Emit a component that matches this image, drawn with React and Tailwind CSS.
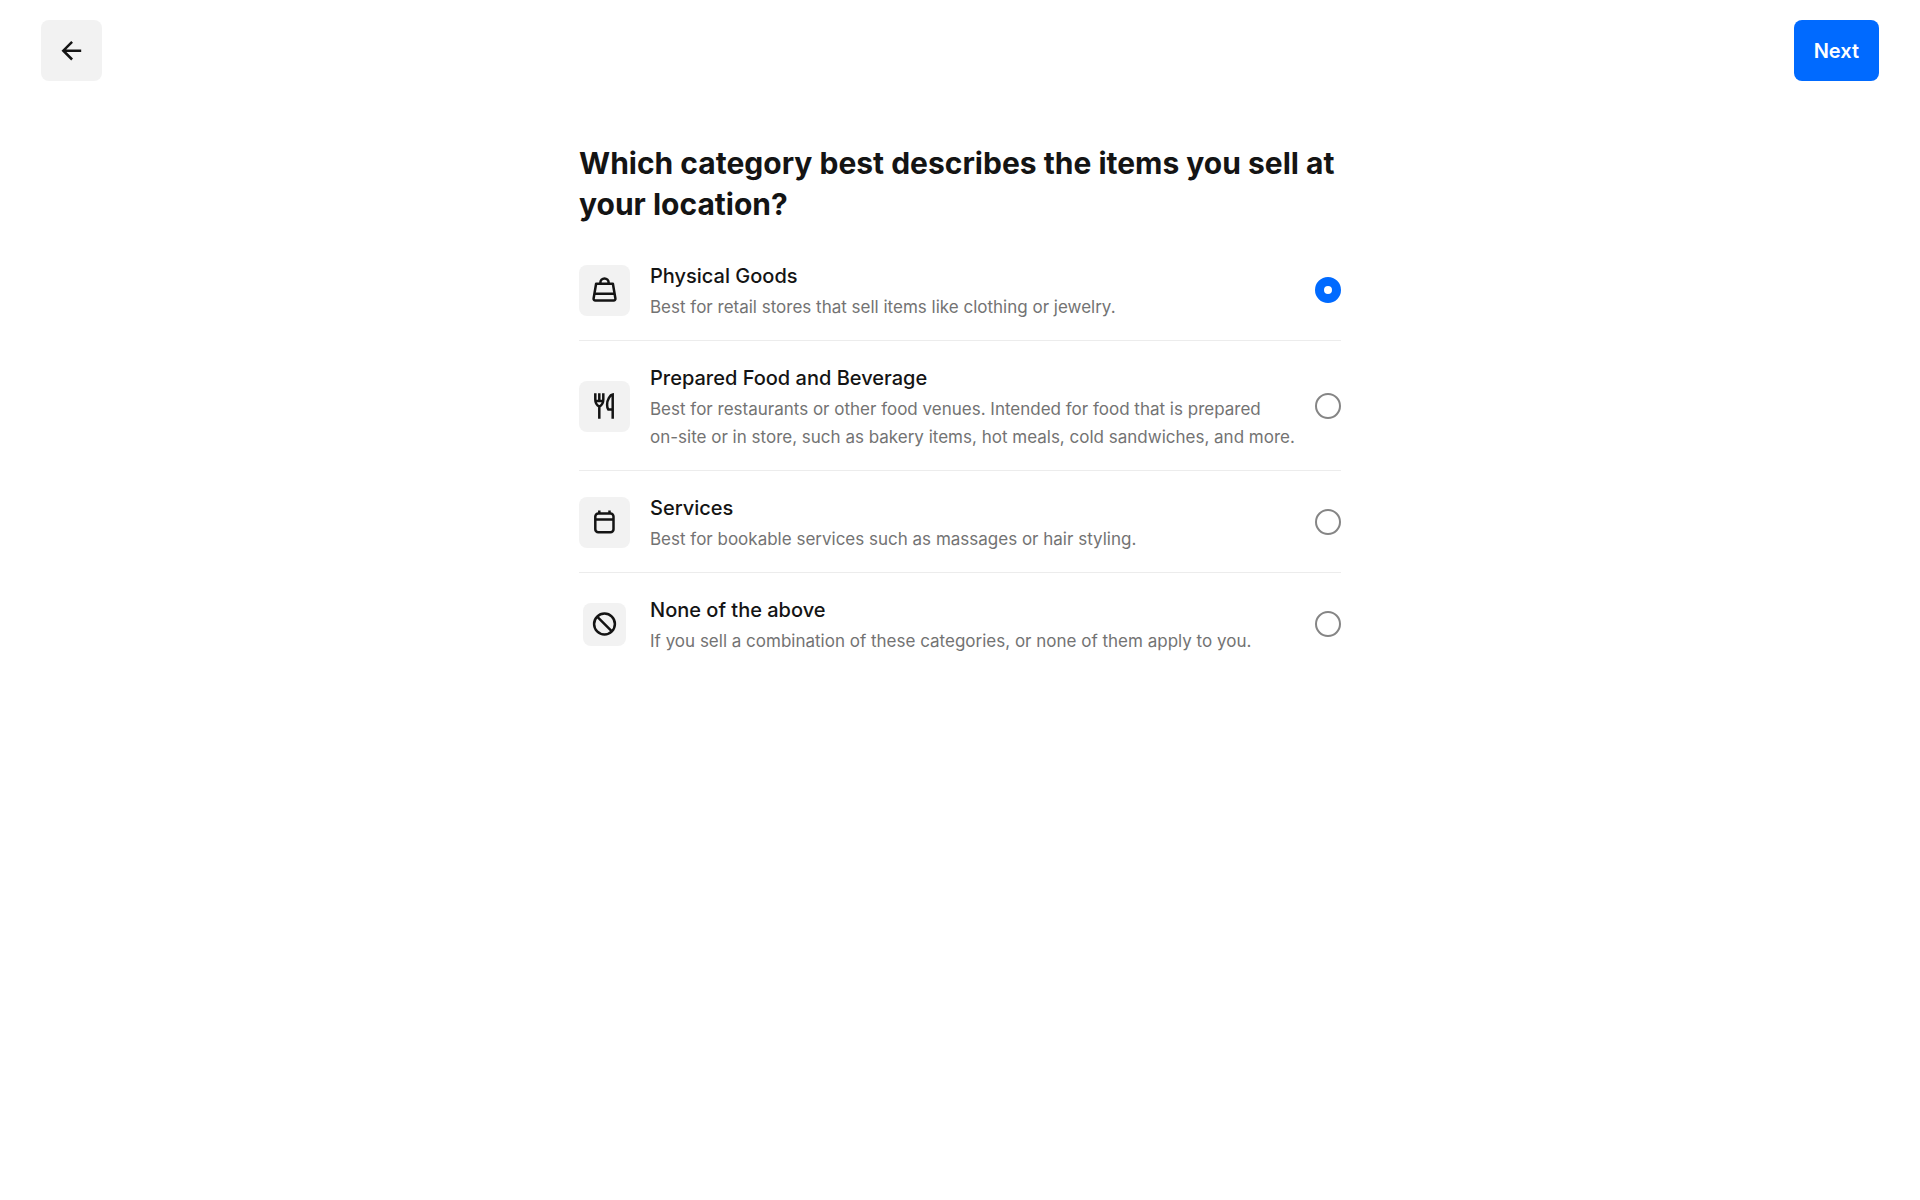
import React, { useState } from 'react';

const iconProps = {
    viewBox: '0 0 30 30',
    fill: 'none',
    stroke: 'currentColor',
    strokeWidth: 2.5,
    'aria-hidden': true,
    className: 'size-[30px]',
};

const ArrowLeftIcon = () => (
    <svg {...iconProps}>
        <path d="m15.1 5.9-8.8 8.8 8.8 8.8M6.5 14.7h17.7" />
    </svg>
);

const BagIcon = () => (
    <svg {...iconProps} strokeLinejoin="round">
        <path d="M6.1 8.7h16.8l2.5 14.8a1.7 1.7 0 0 1-1.7 2H5.3a1.7 1.7 0 0 1-1.7-2L6.1 8.7Z" />
        <path d="M4.3 18.7h20.4M10.4 8.7v-1.1a4.1 4.1 0 0 1 8.2 0v1.1" />
    </svg>
);

const CutleryIcon = () => (
    <svg {...iconProps}>
        <path d="M5.3 2.2v6.4c0 3.6 1.7 5.9 4 7.1 2.3-1.2 4-3.5 4-7.1V2.2M9.3 2.2v8.2M9.3 15v12.8" />
        <path d="M5.3 10h8" />
        <path d="M22.7 27.8V3.5c-2.6.3-5.6 5-5.6 10.2 0 2.4.6 4 1.2 4.8h4.4" />
    </svg>
);

const CalendarIcon = () => (
    <svg {...iconProps}>
        <rect x="5.3" y="6.5" width="18.2" height="18.8" rx="3" />
        <path d="M5.3 12.5h18.2M9.3 3.5v3M19.5 3.5v3" />
    </svg>
);

const NoneIcon = () => (
    <svg {...iconProps}>
        <circle cx="14.5" cy="15" r="10.4" />
        <path d="m7.1 7.6 14.8 14.8" />
    </svg>
);

const categories = [
    {
        id: 'physical-goods',
        title: 'Physical Goods',
        description: 'Best for retail stores that sell items like clothing or jewelry.',
        icon: BagIcon,
    },
    {
        id: 'food-beverage',
        title: 'Prepared Food and Beverage',
        description: (
            <>
                Best for restaurants or other food venues. Intended for food that is prepared{' '}
                <span className="whitespace-nowrap">on-site</span> or in store, such as bakery items, hot
                meals, cold sandwiches, and more.
            </>
        ),
        icon: CutleryIcon,
    },
    {
        id: 'services',
        title: 'Services',
        description: 'Best for bookable services such as massages or hair styling.',
        icon: CalendarIcon,
    },
    {
        id: 'none',
        title: 'None of the above',
        description: 'If you sell a combination of these categories, or none of them apply to you.',
        icon: NoneIcon,
        small: true,
    },
];

const CategoryRow = ({ category, checked, onSelect }) => {
    const Icon = category.icon;
    return (
        <label
            htmlFor={category.id}
            className="flex cursor-pointer items-center border-b border-[#ececec] pt-5 pb-[19px] last:border-b-0"
        >
            <span className="flex w-[51px] shrink-0 justify-center">
                <span
                    className={`flex items-center justify-center rounded-lg bg-[#f2f2f2] ${category.small ? 'size-[43px]' : 'size-[51px]'}`}
                >
                    <Icon />
                </span>
            </span>
            <span className="ml-5 flex min-w-0 flex-1 flex-col gap-0.5 pt-0.5">
                <span className="text-[20px] leading-[30px] font-medium">{category.title}</span>
                <span className="text-[17px] leading-7 text-[#737373]">{category.description}</span>
            </span>
            <input
                id={category.id}
                type="radio"
                name="category"
                checked={checked}
                onChange={onSelect}
                className="ml-5 size-[26px] shrink-0 cursor-pointer appearance-none rounded-full border-2 border-[#858585] bg-white checked:border-[9px] checked:border-[#006aff]"
            />
        </label>
    );
};

const App = () => {
    const [selected, setSelected] = useState('physical-goods');

    return (
        <div className="min-h-screen bg-white font-['Inter',sans-serif] text-[#141414]">
            <header className="flex items-center justify-between px-[41px] py-5">
                <button
                    type="button"
                    aria-label="Back"
                    className="flex size-[61px] items-center justify-center rounded-lg bg-[#f2f2f2]"
                >
                    <ArrowLeftIcon />
                </button>
                <button
                    type="button"
                    className="h-[61px] rounded-lg bg-[#006aff] px-5 text-[20px] font-semibold text-white"
                >
                    Next
                </button>
            </header>

            <main className="mx-auto max-w-[762px] pt-[42px]">
                <h1 className="text-[30px] leading-[41px] font-bold">
                    Which category best describes the items you sell at your location?
                </h1>
                <div role="radiogroup" aria-label="Category" className="mt-3.5">
                    {categories.map((category) => (
                        <CategoryRow
                            key={category.id}
                            category={category}
                            checked={selected === category.id}
                            onSelect={() => setSelected(category.id)}
                        />
                    ))}
                </div>
            </main>
        </div>
    );
};

export default App;
